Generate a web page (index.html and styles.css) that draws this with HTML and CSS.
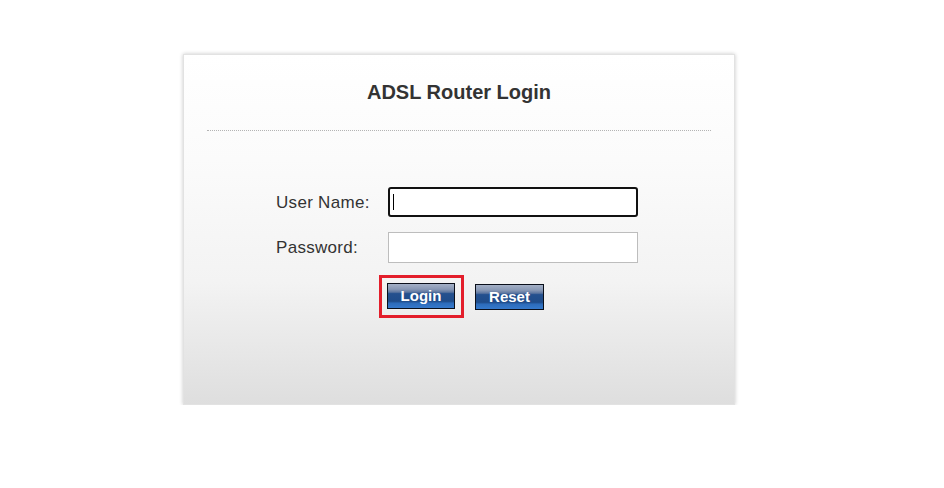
FILE: index.html
```html
<!DOCTYPE html>
<html>
<head>
<meta charset="utf-8">
<title>ADSL Router Login</title>
<link rel="stylesheet" href="styles.css">
</head>
<body>
<div class="panel">
  <h1 class="title">ADSL Router Login</h1>
  <div class="divider"></div>
  <form class="form">
    <label class="label" for="user">User Name:</label>
    <div class="field"><input id="user" class="input input-focus" type="text" value=""><span class="caret"></span></div>
    <label class="label" for="pass">Password:</label>
    <div class="field"><input id="pass" class="input" type="password"></div>
  </form>
  <div class="actions">
    <span class="highlight"><button class="btn" type="button">Login</button></span>
    <button class="btn" type="button">Reset</button>
  </div>
</div>
</body>
</html>
```
FILE: styles.css
```css
html, body {
  margin: 0;
  padding: 0;
  background: #ffffff;
}
body {
  padding-top: 54px;
  font-family: "Liberation Sans", Arial, sans-serif;
  color: #333333;
}
.panel {
  box-sizing: border-box;
  width: 552px;
  height: 351px;
  margin-left: 183px;
  border: 1px solid #e2e2e2;
  box-shadow: 0 0 4px rgba(0, 0, 0, 0.22);
  background: linear-gradient(to bottom, #ffffff 0%, #fbfbfb 30%, #f3f3f3 65%, #dedede 100%);
  padding: 25px 23px 0 23px;
}
.title {
  margin: 0;
  font-size: 20px;
  line-height: 24px;
  font-weight: bold;
  text-align: center;
  color: #333333;
}
.divider {
  margin-top: 26px;
  border-top: 1px dotted #b4b4b4;
  height: 0;
}
.form {
  display: grid;
  grid-template-columns: 112px 250px;
  row-gap: 14px;
  margin: 56px 0 0 69px;
  align-items: center;
}
.label {
  font-size: 17px;
  letter-spacing: 0.3px;
  color: #333333;
  line-height: 20px;
}
.field {
  position: relative;
  height: 31px;
}
.input {
  box-sizing: border-box;
  width: 250px;
  height: 31px;
  margin: 0;
  border: 1px solid #bdbdbd;
  background: #ffffff;
  padding: 0 6px;
  font-size: 15px;
  font-family: "Liberation Sans", Arial, sans-serif;
  outline: none;
}
.input-focus {
  height: 30px;
  border: 2px solid #111111;
  border-radius: 3px;
}
.caret {
  position: absolute;
  left: 5px;
  top: 7px;
  width: 1px;
  height: 16px;
  background: #000000;
}
.actions {
  display: flex;
  align-items: center;
  gap: 11px;
  margin: 12px 0 0 172px;
}
.highlight {
  display: inline-flex;
  border: 3px solid #e31e2b;
  padding: 5px 6px 6px 5px;
}
.btn {
  box-sizing: border-box;
  width: 69px;
  height: 26px;
  margin: 0;
  padding: 0 0 1px 0;
  border: 1px solid #0a0f1a;
  font-family: "Liberation Sans", Arial, sans-serif;
  font-size: 15px;
  font-weight: bold;
  color: #ffffff;
  background: linear-gradient(to bottom,
    #a4b0c6 0%, #8797b4 22%, #5d76a0 34%,
    #24508e 40%, #1f4c8a 72%,
    #2d6cbb 80%, #3579cc 100%);
  cursor: pointer;
}
.highlight .btn {
  width: 68px;
}
```
